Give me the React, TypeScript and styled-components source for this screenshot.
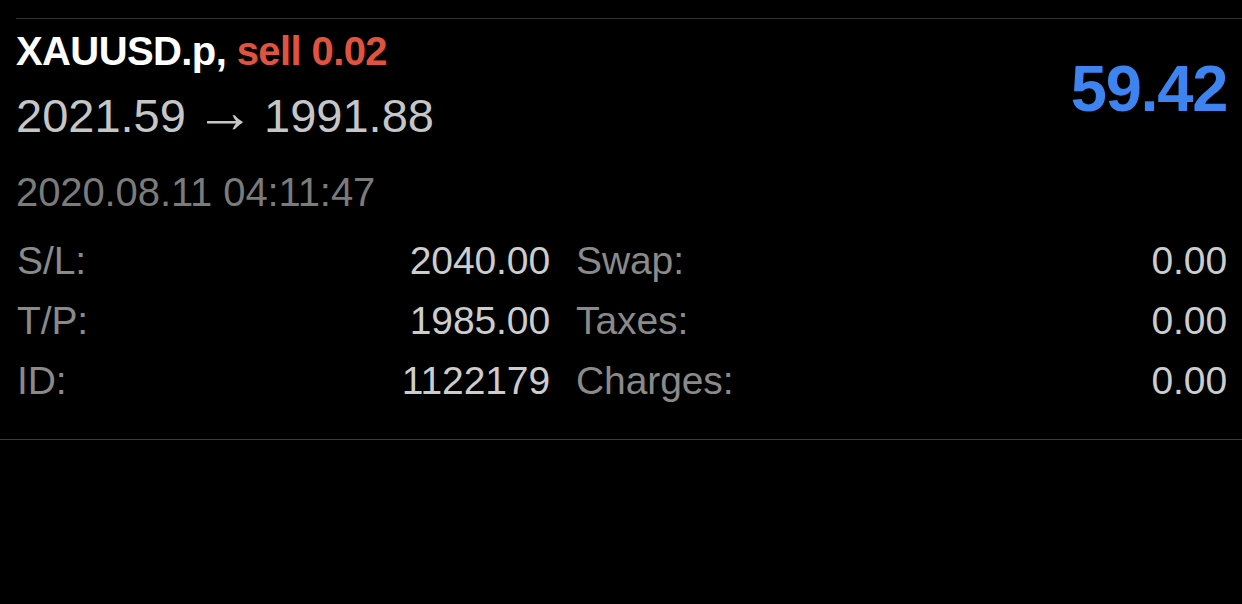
import React from 'react';
import styled, { createGlobalStyle } from 'styled-components';

const GlobalStyle = createGlobalStyle`
  html, body {
    margin: 0;
    padding: 0;
    background: #000;
  }
  body {
    font-family: "Liberation Sans", Arial, Helvetica, sans-serif;
    -webkit-font-smoothing: antialiased;
  }
`;

interface Field {
  label: string;
  value: string;
}

const fields: Field[][] = [
  [{ label: 'S/L:', value: '2040.00' }, { label: 'Swap:', value: '0.00' }],
  [{ label: 'T/P:', value: '1985.00' }, { label: 'Taxes:', value: '0.00' }],
  [{ label: 'ID:', value: '1122179' }, { label: 'Charges:', value: '0.00' }],
];

function App() {
  return (
    <>
      <GlobalStyle />
      <Page>
        <PositionItem>
          <Header>
            <div>
              <Title>
                XAUUSD.p, <Side>sell 0.02</Side>
              </Title>
              <Prices>
                2021.59 <Arrow>→</Arrow> 1991.88
              </Prices>
            </div>
            <Profit>59.42</Profit>
          </Header>

          <OpenTime>2020.08.11 04:11:47</OpenTime>

          <Details>
            {fields.map((row) => row.map((f) => (
              <DetailCell key={f.label}>
                <Label>{f.label}</Label>
                <Value>{f.value}</Value>
              </DetailCell>
            )))}
          </Details>
        </PositionItem>
        <Divider />
      </Page>
    </>
  );
}

export default App;

const Page = styled.div`
  padding-top: 18px;
  min-height: 604px;
  box-sizing: border-box;
  background: #000;
`;

const PositionItem = styled.div`
  margin-left: 16px;
  padding: 9px 15px 28px 0;
  border-top: 1px solid #333333;
`;

const Header = styled.div`
  display: flex;
  justify-content: space-between;
  align-items: center;
`;

const Title = styled.div`
  font-size: 40px;
  line-height: 46px;
  font-weight: 700;
  color: #ffffff;
  letter-spacing: -0.6px;
`;

const Side = styled.span`
  color: #e0533f;
`;

const Prices = styled.div`
  margin-top: 15px;
  font-size: 47px;
  line-height: 54px;
  color: #c6c6c6;
`;

const Arrow = styled.span`
  margin: 0 -4px;
  font-size: 60px;
  line-height: 0;
  font-weight: 400;
`;

const Profit = styled.div`
  padding-top: 6px;
  font-size: 65px;
  line-height: 70px;
  font-weight: 700;
  color: #3d84f0;
  letter-spacing: -1.3px;
`;

const OpenTime = styled.div`
  margin-top: 27px;
  font-size: 40px;
  line-height: 44px;
  color: #7b7b7b;
  letter-spacing: -0.1px;
`;

const Details = styled.div`
  margin-top: 17px;
  display: grid;
  grid-template-columns: 534px 1fr;
  column-gap: 25px;
`;

const DetailCell = styled.div`
  display: flex;
  justify-content: space-between;
  font-size: 39px;
  line-height: 60px;
  letter-spacing: -0.1px;
`;

const Label = styled.span`
  color: #8a8a8a;
  padding-left: 1px;
`;

const Value = styled.span`
  color: #cdcdcd;
`;

const Divider = styled.div`
  height: 1px;
  background: #3a3a3a;
`;
